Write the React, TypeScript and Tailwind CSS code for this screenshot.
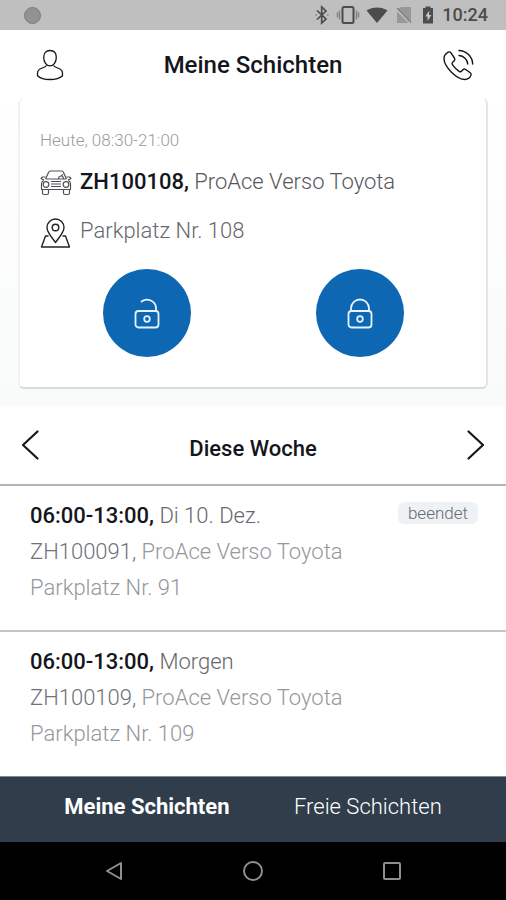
import React from "react";

function StatusBar() {
  return (
    <div className="flex h-[30px] items-center bg-[#bfbfbf] pr-[18px] pl-6 text-[#4c4c4c]">
      <span className="h-[17px] w-[17px] rounded-full border border-[#7d7d7d] bg-[#929292]" />
      <div className="ml-auto flex items-center">
        <svg className="h-5 w-4" viewBox="0 0 16 20" fill="none" stroke="currentColor" strokeWidth="1.7">
          <path d="M3 5.500l9 8.500-4.300 4V2l4.300 4-9 8.500" />
          <path d="M1.700 10h.8M13.500 10h.8" />
        </svg>
        <svg className="ml-1.5 h-5 w-6" viewBox="0 0 24 20" fill="none" stroke="currentColor">
          <rect x="6.500" y="2" width="11" height="16" rx="1.500" strokeWidth="2" />
          <path d="M3.500 5.500v9M20.500 5.500v9M1.500 7.500v5M22.500 7.500v5" stroke="#858585" strokeWidth="1.500" />
        </svg>
        <svg className="ml-1.5 h-5 w-[22px]" viewBox="0 0 22 20" fill="currentColor">
          <path d="M.5 5.500C6.500 1.400 15.500 1.400 21.500 5.500L11 18z" />
        </svg>
        <svg className="ml-2 h-5 w-4" viewBox="0 0 16 20">
          <path d="M15 2v15.500L1.500 3.700 5.500 2zM1 6.500L12.500 18H1z" fill="#989898" />
          <path d="M1 3l14 14.500" stroke="#858585" strokeWidth="1.500" />
        </svg>
        <svg className="ml-2.5 h-5 w-3" viewBox="0 0 12 20">
          <path d="M3.500 1.500h5V3H11v15.500H1V3h2.500z" fill="currentColor" />
          <path d="M7.300 5.500l-4 6h2.300v4.500l3.800-6H7z" fill="#c8c8c8" />
        </svg>
        <span className="ml-2 text-lg leading-5 font-medium">10:24</span>
      </div>
    </div>
  );
}

function PersonIcon() {
  return (
    <svg className="h-8 w-7" viewBox="0 0 28 32" fill="none" stroke="currentColor" strokeWidth="1.300">
      <path d="M14 1.500c4 0 6.300 2.800 6.300 7 0 4.500-2.600 8.300-6.300 8.300s-6.300-3.800-6.300-8.300c0-4.200 2.300-7 6.300-7z" />
      <path d="M10.500 16.500c-.7 1.500-3.300 2-5.500 3-2.500 1.100-3.500 2.500-3.500 5v2.200c2.600 2.500 7.500 3.800 12.500 3.800s9.900-1.300 12.500-3.800v-2.200c0-2.500-1-3.900-3.500-5-2.200-1-4.800-1.500-5.500-3" />
    </svg>
  );
}

function CallIcon() {
  return (
    <svg className="h-8 w-8" viewBox="0 0 32 32" fill="none" stroke="currentColor" strokeWidth="1.400" strokeLinecap="round" strokeLinejoin="round">
      <path d="M6.200 3.200C4 4.500 2 6.500 2 9.500c0 4.500 3.800 10 7.500 13.700 3.900 3.900 9 7.300 13.500 7.300 3 0 5-2 6-4.200.4-1-.1-1.900-.8-2.500l-4.500-3.300c-1-.7-2-.6-2.800.2l-1.700 1.700c-.6.5-1.400.5-2.100 0-2.500-1.700-5-4.200-6.700-6.700-.5-.7-.5-1.500 0-2.100l1.800-1.800c.8-.8.9-1.800.2-2.800L9 3.900c-.7-.9-1.700-1.300-2.800-.7z" />
      <path d="M17 1.500c7.400.2 13.400 6.200 13.700 13.500M17 6.500c4.700.2 8.500 4 8.700 8.500" />
    </svg>
  );
}

function CarIcon() {
  return (
    <svg className="h-7 w-8" viewBox="0 0 32 28" fill="none" stroke="currentColor" strokeWidth="1.200" strokeLinejoin="round">
      <path d="M5.500 10L8.500 3.500C8.900 2.600 9.500 2 10.500 2h11c1 0 1.600.6 2 1.500l3 6.500M5.500 10H26.500" />
      <path d="M5.500 8H2.500L1 9.500l3 1.500M26.500 8h3l1.500 1.500-3 1.500M4 11c-1.700 1-2.500 2.500-2.500 4v5.500h29V15c0-1.500-.8-3-2.500-4" />
      <path d="M2.500 20.500v3.500c0 1 .6 1.500 1.500 1.500h3c.9 0 1.500-.5 1.500-1.500v-3.500M23.500 20.500v3.500c0 1 .6 1.500 1.500 1.500h3c.9 0 1.500-.5 1.500-1.500v-3.500M11 12.500h10M11 15h10M11 17.500h10" />
      <circle cx="6" cy="15.500" r="2.800" />
      <circle cx="26" cy="15.500" r="2.800" />
      <path d="M18.500 10c0-4 5-4 5 0M21 7l2-1.500" />
    </svg>
  );
}

function PinIcon() {
  return (
    <svg className="h-8 w-8" viewBox="0 0 32 32" fill="none" stroke="#222" strokeWidth="1.400" strokeLinejoin="round">
      <path d="M15.500 26.500C12 21.500 7 16.500 7 11.500a8.500 8.500 0 0 1 17 0c0 5-5 10-8.500 15z" />
      <circle cx="15.500" cy="11.500" r="3.300" />
      <path d="M8.500 20H5.500L1.500 31h28L25.500 20h-3" />
    </svg>
  );
}

function LockIcon({ open }: { open: boolean }) {
  return (
    <svg className="h-8 w-7" viewBox="0 0 28 32" fill="none" stroke="#e9f2fb" strokeWidth="1.800" strokeLinecap="round">
      <rect x="2.500" y="14" width="23" height="16.500" rx="3" />
      <circle cx="14" cy="22" r="2.800" />
      {open ? (
        <path d="M8.500 4.500C14 .5 23 3.500 23 11.500V14" />
      ) : (
        <path d="M5 14v-2.500a9 9 0 0 1 18 0V14" />
      )}
    </svg>
  );
}

function Chevron({ flip = false }: { flip?: boolean }) {
  return (
    <svg className="h-8 w-5" viewBox="0 0 20 32" fill="none" stroke="#17171f" strokeWidth="2.200" strokeLinecap="round" strokeLinejoin="round">
      <path d={flip ? "M2.500 2.500L17 16 2.500 29.500" : "M17.500 2.500L3 16l14.500 13.500"} />
    </svg>
  );
}

const shifts = [
  { time: "06:00-13:00,", day: "Di 10. Dez.", plate: "ZH100091,", car: "ProAce Verso Toyota", spot: "Parkplatz Nr. 91", done: true },
  { time: "06:00-13:00,", day: "Morgen", plate: "ZH100109,", car: "ProAce Verso Toyota", spot: "Parkplatz Nr. 109", done: false },
];

export default function App() {
  return (
    <div className="flex min-h-screen flex-col bg-white font-['Roboto',sans-serif] text-[22px] text-[#14161c]">
      <StatusBar />
      <header className="flex h-[68px] items-center justify-between pt-0.5 pr-8 pl-9">
        <button aria-label="Profil"><PersonIcon /></button>
        <h1 className="text-2xl font-medium">Meine Schichten</h1>
        <button aria-label="Anrufen"><CallIcon /></button>
      </header>

      <section className="bg-linear-to-b from-white to-[#f9fafa] px-[18px] pb-[17px]">
        <div className="rounded-md border-x-2 border-b-2 border-r-[#e4e5e5] border-b-[#d8d9d9] border-l-[#f0f1f1] bg-white px-5 pt-7 pb-[30px]">
          <p className="text-[17px] leading-7 font-light text-[#999c9f]">Heute, 08:30-21:00</p>
          <div className="mt-[11px] flex h-8 items-center gap-2">
            <span className="pt-1 text-[#505258]"><CarIcon /></span>
            <p className="font-light text-[#55575b]">
              <b className="font-medium text-[#14161c]">ZH100108,</b> ProAce Verso Toyota
            </p>
          </div>
          <div className="mt-[17px] flex h-8 items-center gap-2">
            <span className="pt-1"><PinIcon /></span>
            <p className="font-light text-[#66686c]">Parkplatz Nr. 108</p>
          </div>
          <div className="mt-[23px] flex justify-around">
            <button aria-label="Aufschliessen" className="flex h-22 w-22 items-center justify-center rounded-full bg-[#0d67b2]">
              <LockIcon open />
            </button>
            <button aria-label="Abschliessen" className="flex h-22 w-22 items-center justify-center rounded-full bg-[#0d67b2]">
              <LockIcon open={false} />
            </button>
          </div>
        </div>
      </section>

      <nav className="flex h-20 items-center justify-between border-b-2 border-[#b4b4b4] px-5" aria-label="Woche">
        <button aria-label="Vorherige Woche"><Chevron /></button>
        <h2 className="pt-1.5 font-medium">Diese Woche</h2>
        <button aria-label="Nächste Woche"><Chevron flip /></button>
      </nav>

      <ul className="flex-1 divide-y-2 divide-[#c4c5c5]">
        {shifts.map((s) => (
          <li key={s.plate} className="flex items-start justify-between pt-3 pr-7 pb-6 pl-[30px] leading-9 font-light text-[#95989b]">
            <div>
              <p className="text-[#66686c]">
                <b className="font-medium text-[#14161c]">{s.time}</b> {s.day}
              </p>
              <p><span className="text-[#707276]">{s.plate}</span> {s.car}</p>
              <p>{s.spot}</p>
            </div>
            {s.done && (
              <span className="mt-1 rounded-md bg-[#eff2f4] px-2.5 text-[17px] leading-[22px] text-[#666a70]">beendet</span>
            )}
          </li>
        ))}
      </ul>

      <nav className="flex h-[66px] items-center justify-around border-t border-[#7d8994] bg-[#303d4b] px-8 pb-1.5 text-white" aria-label="Schichten">
        <a href="#meine" className="font-bold">Meine Schichten</a>
        <a href="#freie" className="font-light">Freie Schichten</a>
      </nav>

      <div className="flex h-[58px] items-center justify-around bg-black px-11 text-[#8f8f8f]">
        <button aria-label="Zurück">
          <svg className="h-6 w-6" viewBox="0 0 24 24" fill="none" stroke="currentColor" strokeWidth="2" strokeLinejoin="round"><path d="M19 4v16L5 12z" /></svg>
        </button>
        <button aria-label="Startbildschirm">
          <svg className="h-6 w-6" viewBox="0 0 24 24" fill="none" stroke="currentColor" strokeWidth="2"><circle cx="12" cy="12" r="9" /></svg>
        </button>
        <button aria-label="Übersicht">
          <svg className="h-6 w-6" viewBox="0 0 24 24" fill="none" stroke="currentColor" strokeWidth="2"><rect x="4" y="4" width="16" height="16" rx="1" /></svg>
        </button>
      </div>
    </div>
  );
}
